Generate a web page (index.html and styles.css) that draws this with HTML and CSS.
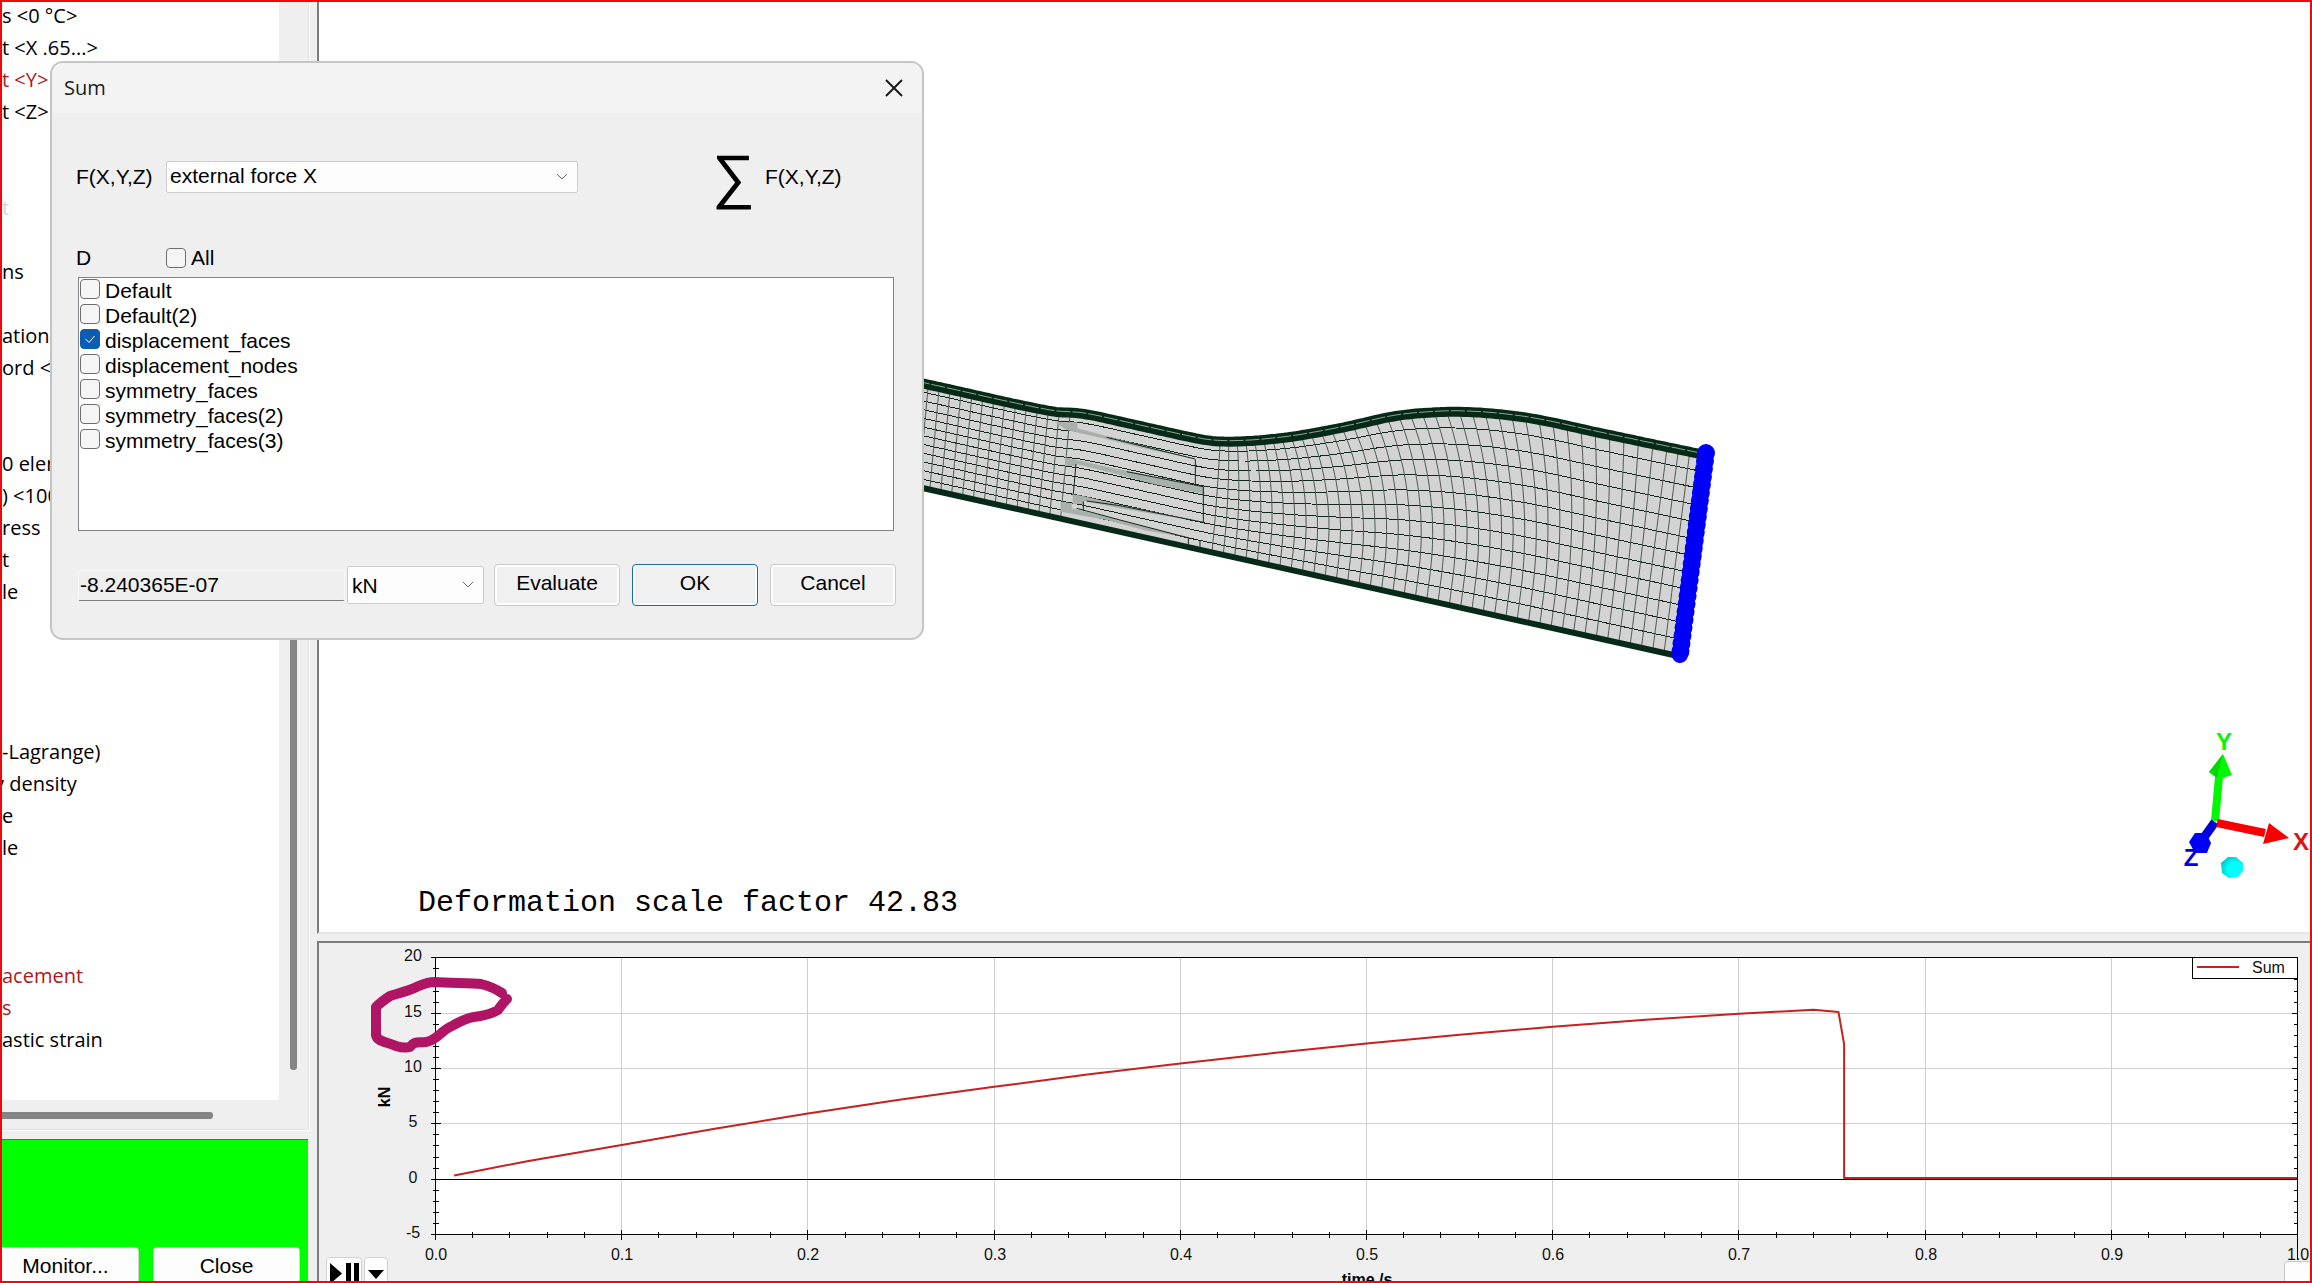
FILE: index.html
```html
<!DOCTYPE html>
<html lang="en">
<head>
<meta charset="utf-8">
<title>Sum</title>
<link rel="stylesheet" href="styles.css">
</head>
<body>
<main class="app">
  <aside class="side">
    <section class="tree-pane">
      <ul class="tree">
        <li>s &lt;0 °C&gt;</li>
        <li>t &lt;X .65...&gt;</li>
        <li class="alert">t &lt;Y&gt;</li>
        <li>t &lt;Z&gt;</li>
        <li></li>
        <li></li>
        <li class="dim">t</li>
        <li></li>
        <li>ns</li>
        <li></li>
        <li>ation &lt;</li>
        <li>ord &lt;</li>
        <li></li>
        <li></li>
        <li>0 elements</li>
        <li>) &lt;100</li>
        <li>ress</li>
        <li>t</li>
        <li>le</li>
        <li></li>
        <li></li>
        <li></li>
        <li></li>
        <li>-Lagrange)</li>
        <li class="cut">y density</li>
        <li>e</li>
        <li>le</li>
        <li></li>
        <li></li>
        <li></li>
        <li class="alert">acement</li>
        <li class="alert">s</li>
        <li>astic strain</li>
      </ul>
      <div class="scroll-v"><div class="thumb-v"></div></div>
      <div class="scroll-h"><div class="thumb-h"></div></div>
    </section>
    <section class="status-pane">
      <button class="status-btn" type="button">Monitor...</button>
      <button class="status-btn" type="button">Close</button>
    </section>
  </aside>

  <div class="work">
    <section class="scene-pane">
      <svg class="drawing" viewBox="319 2 1991 930" role="img" aria-label="Deformed mesh">
        <path id="body" class="mesh-fill"/>
        <g id="mesh"></g>
        <g transform="translate(920 360) scale(.33333)">
          <path class="shade" d="M405 187L472 187 472 205 560 228 700 265 815 293 700 272 560 238 440 210Z"/>
          <path class="shade" d="M435 292L560 320 730 355 850 380 855 403 700 372 580 340 468 312 468 318 435 318Z"/>
          <path class="shade" d="M458 403L490 408 600 435 850 485 700 462 600 445 490 422 490 432 458 432Z"/>
          <path class="shade" d="M422 425L455 430 455 445 560 470 820 535 680 512 560 480 422 455Z"/>
          <path class="crease" d="M560 232L825 297M620 335L850 380M500 423L600 437 850 487M470 445L600 480 810 535M468 312L460 402M490 424V452M826 298V375M850 380L850 487M805 535V553M840 542V560"/>
        </g>
        <path id="bottomEdge" class="edge edge-bottom"/>
        <path id="topEdge" class="edge edge-top"/>
        <path id="topSeam" class="seam"/>
        <path class="bc-core" d="M1706 453L1680 655"/>
        <path class="bc-dots" d="M1706 453L1680 655"/>

        <path d="M2215 821L2219 777" stroke="#00f800" stroke-width="8"/>
        <path d="M2223 754L2209 772 2219 779 2232 775Z" fill="#00f800"/>
        <path d="M2209 772L2223 754 2217 778Z" fill="#00d900"/>
        <path d="M2215 822L2200 843" stroke="#0000d8" stroke-width="9"/>
        <path d="M2217 823L2265 833" stroke="#f80000" stroke-width="8"/>
        <path d="M2269 823L2289 838 2263 844Z" fill="#f80000"/>
        <path d="M2195 833L2206 833 2211 843 2207 853 2195 853 2189 842Z" fill="#0000f8"/>
        <defs>
          <radialGradient id="ball" cx="65%" cy="60%" r="70%">
            <stop offset=".5" stop-color="#00ffff"/><stop offset="1" stop-color="#00c4c8"/>
          </radialGradient>
        </defs>
        <path d="M2228 857L2236 857 2243 863 2243 871 2238 877 2229 878 2222 873 2221 863Z" fill="url(#ball)"/>
        <text class="axis-name" x="2224" y="750" fill="#00f800">Y</text>
        <text class="axis-name" x="2301" y="850" fill="#dc1414">X</text>
        <text class="axis-name" x="2191" y="866" fill="#0000dc">Z</text>
        <text class="scale-note" x="418" y="911">Deformation scale factor 42.83</text>
      </svg>
    </section>

    <section class="chart-pane">
      <svg class="drawing" viewBox="319 943 1991 338" role="img" aria-label="Sum over time">
        <rect x="435" y="957" width="1862" height="277" fill="#fff"/>
        <path id="grid" class="grid"/>
        <path id="curve" class="curve"/>
        <path id="axes" class="axes"/>
        <g id="labels" class="ticks"></g>
        <text class="axis-title" transform="translate(390 1097) rotate(-90)">kN</text>
        <text class="axis-title" x="1367" y="1285">time /s</text>
        <rect x="2192.5" y="957.5" width="105" height="21" fill="#fff" stroke="#000"/>
        <path class="curve" d="M2197 967H2239"/>
        <text class="legend" x="2252" y="973">Sum</text>
        <path class="marker" d="M502 993C496 989 489 986 481 984C472 983 450 983 435 982C424 982 420 986 412 989C404 992 396 994 390 996C384 1000 379 1004 376 1007L376 1035C377 1042 388 1042 396 1046C402 1048 406 1048 410 1047C414 1041 418 1043 426 1042C438 1040 440 1031 452 1026C459 1022 466 1018 474 1017C482 1016 491 1014 498 1010C501 1006 502 1004 507 999"/>
      </svg>
      <div class="player">
        <button class="play-btn" type="button" aria-label="Play or pause">
          <svg width="36" height="34" viewBox="0 0 36 34"><path d="M4 6L16 16.500 4 27ZM20 6h5v21h-5zM28 6h5v21h-5z"/></svg>
        </button>
        <button class="play-btn" type="button" aria-label="Playback options">
          <svg width="24" height="34" viewBox="0 0 24 34"><path d="M4 13H20L12 22Z"/></svg>
        </button>
      </div>
      <button class="corner-btn" type="button" aria-label="More"></button>
    </section>
  </div>
</main>

<section class="dialog" role="dialog" aria-labelledby="dialogTitle">
  <header class="titlebar">
    <h1 class="title" id="dialogTitle">Sum</h1>
    <button class="close" type="button" aria-label="Close dialog">
      <svg width="18" height="18" viewBox="0 0 18 18"><path d="M1 1L17 17M17 1L1 17"/></svg>
    </button>
  </header>
  <form class="form">
    <div class="row-function">
      <label for="fn">F(X,Y,Z)</label>
      <span class="combo combo-fn">
        <select id="fn"><option>external force X</option></select>
        <svg class="chevron" width="12" height="8" viewBox="0 0 12 8"><path d="M1 1L6 6 11 1"/></svg>
      </span>
      <span class="sigma">∑</span>
      <span>F(X,Y,Z)</span>
    </div>
    <div class="row-domain">
      <span>D</span>
      <label class="check"><input type="checkbox">All</label>
    </div>
    <div class="list">
      <label class="check item"><input type="checkbox">Default</label>
      <label class="check item"><input type="checkbox">Default(2)</label>
      <label class="check item"><input type="checkbox" checked>displacement_faces</label>
      <label class="check item"><input type="checkbox">displacement_nodes</label>
      <label class="check item"><input type="checkbox">symmetry_faces</label>
      <label class="check item"><input type="checkbox">symmetry_faces(2)</label>
      <label class="check item"><input type="checkbox">symmetry_faces(3)</label>
    </div>
    <div class="row-actions">
      <input class="result" type="text" value="-8.240365E-07" aria-label="Result" readonly>
      <span class="combo combo-unit">
        <select aria-label="Unit"><option>kN</option></select>
        <svg class="chevron" width="12" height="8" viewBox="0 0 12 8"><path d="M1 1L6 6 11 1"/></svg>
      </span>
      <button class="btn" type="button">Evaluate</button>
      <button class="btn btn-default" type="button">OK</button>
      <button class="btn" type="button">Cancel</button>
    </div>
  </form>
</section>
<script src="plot.js"></script>
</body>
</html>
```
FILE: styles.css
```css
*, *::before, *::after { box-sizing: border-box; }

body {
  position: relative;
  margin: 0;
  height: 100vh;
  overflow: hidden;
  border: 2px solid #ee0a0a;
  background: #efefef;
  color: #000;
  font-family: "Liberation Sans", Arial, sans-serif;
  font-size: 21px;
  line-height: 24px;
}

button, input, select { font: inherit; color: inherit; margin: 0; }

.app {
  display: grid;
  grid-template-columns: 308px minmax(0, 1fr);
  gap: 7px;
  height: 100%;
}

/* Result tree on the left */
.side {
  display: flex;
  flex-direction: column;
  gap: 8px;
  min-height: 0;
}
.tree-pane {
  flex: 1;
  min-height: 0;
  display: grid;
  grid-template-columns: 1fr 30px;
  grid-template-rows: 1fr 30px;
  border-right: 1px solid #fff;
  border-bottom: 1px solid #fff;
  box-shadow: inset -1px -1px #e2e2e2;
}
.tree {
  margin: 0;
  padding: 0;
  list-style: none;
  overflow: hidden;
  background: #fff;
  font-family: "Open Sans", "Noto Sans", sans-serif;
  font-size: 20px;
  line-height: 32px;
  white-space: nowrap;
}
.tree li { height: 32px; }
.tree li:first-child { margin-top: -2px; }
.cut { margin-left: -8px; }
.alert { color: #b01818; }
.dim { color: #dcd4d4; }
.scroll-v { display: flex; justify-content: center; align-items: flex-end; padding: 0 2px 30px 0; }
.thumb-v { width: 7px; height: 80%; border-radius: 3px; background: #858585; }
.scroll-h { display: flex; align-items: center; grid-column: 1 / -1; }
.thumb-h { width: 211px; height: 7px; border-radius: 0 3px 3px 0; background: #858585; }

.status-pane {
  display: flex;
  align-items: flex-end;
  gap: 14px;
  height: 142px;
  margin-right: 2px;
  overflow: hidden;
  border-top: 1px solid #5f6a5f;
  background: #00ff00;
}
.status-btn {
  width: 147px;
  height: 38px;
  flex: none;
  margin-bottom: -4px;
  padding: 0;
  border: 1px solid #d0d8d0;
  border-radius: 4px;
  background: #fdfdfd;
}
.status-btn:first-child { margin-left: -10px; }

/* Viewport and chart */
.work { display: flex; flex-direction: column; gap: 7px; min-height: 0; }
.scene-pane, .chart-pane { border-left: 2px solid #7c7c7c; }
.scene-pane {
  flex: 1;
  min-height: 0;
  background: #fff;
  border-bottom: 2px solid #e6e6e6;
}
.chart-pane {
  position: relative;
  height: 340px;
  overflow: hidden;
  border-top: 2px solid #7c7c7c;
}
.drawing { display: block; width: 100%; height: 100%; fill: none; }

.mesh-fill { fill: #d3d3d3; }
.mesh-row { stroke: #10261b; stroke-width: 1; shape-rendering: crispEdges; }
.mesh-col { stroke: #4d5a53; stroke-width: 1; }
.shade { fill: #a9b0ac; }
.crease { stroke: #10261b; stroke-width: 3; }
.edge { stroke: #062a17; stroke-linejoin: round; }
.edge-bottom { stroke-width: 6; }
.edge-top { stroke-width: 10; }
.seam { stroke: #8fa396; stroke-width: 1; stroke-dasharray: 14 2; }
.bc-core { stroke: #0000f8; stroke-width: 16; stroke-linecap: round; }
.bc-dots { stroke: #0000f8; stroke-width: 18; stroke-linecap: round; stroke-dasharray: 0 8; }
.axis-name { font-size: 24px; font-weight: 700; text-anchor: middle; }
.scale-note { fill: #000; font-family: "Liberation Mono", "Courier New", monospace; font-size: 30px; }

.grid { stroke: #cfcfcf; shape-rendering: crispEdges; }
.axes { stroke: #000; shape-rendering: crispEdges; }
.curve { stroke: #c62020; stroke-width: 2; stroke-linejoin: round; }
.ticks { fill: #111; font-size: 16px; text-anchor: middle; }
.legend { fill: #111; font-size: 16px; }
.axis-title { fill: #000; font-size: 16px; font-weight: 700; text-anchor: middle; }
.marker { stroke: #b01465; stroke-width: 10; stroke-linecap: round; stroke-linejoin: round; }

.player { position: absolute; left: 7px; bottom: -10px; display: flex; gap: 2px; }
.play-btn {
  display: flex;
  padding: 0;
  border: 0;
  border-radius: 4px;
  background: #fdfdfd;
  box-shadow: inset 0 0 0 1px #d2d2d2;
}
.corner-btn {
  position: absolute;
  right: -6px;
  bottom: -12px;
  width: 32px;
  height: 32px;
  border: 1px solid #c8c8c8;
  border-radius: 4px;
  background: #fdfdfd;
}

/* Sum dialog, floating over the workspace */
.dialog {
  position: absolute;
  left: 48px;
  top: 59px;
  width: 874px;
  overflow: hidden;
  border: 2px solid #c5c5c5;
  border-radius: 13px;
  background: #efefef;
}
.titlebar {
  display: flex;
  align-items: center;
  justify-content: space-between;
  height: 50px;
  padding: 0 19px 0 12px;
  background: #f3f3f3;
}
.title {
  margin: 0;
  color: #1a1a1a;
  font-family: "Open Sans", "Noto Sans", sans-serif;
  font-size: 20px;
  font-weight: 400;
  line-height: 24px;
}
.close { display: flex; padding: 0; border: 0; background: none; }
.close path { fill: none; stroke: #1a1a1a; stroke-width: 2; }

.form { padding: 38px 24px 32px; }
.row-function, .row-domain {
  display: grid;
  grid-template-columns: 90px 412px 134px 53px auto;
  align-items: center;
}
.row-function { height: 52px; }
.row-function .sigma { grid-column: 4; font-size: 60px; line-height: 48px; }
.row-domain { height: 24px; margin-top: 43px; }

.combo { position: relative; display: block; }
.combo-fn { height: 32px; }
.combo-unit { width: 137px; height: 38px; margin: 0 10px 0 2px; }
.combo select {
  display: block;
  width: 100%;
  height: 100%;
  padding: 0 4px;
  appearance: none;
  border: 1px solid #cdcdcd;
  border-radius: 2px;
  background: #fdfdfd;
}
.combo-fn select { padding: 0 3px 2px; }
.combo-unit select { padding-top: 2px; }
.combo .chevron { position: absolute; right: 10px; top: 50%; margin-top: -4px; pointer-events: none; }
.chevron path { fill: none; stroke: #666; stroke-width: 1; }

.check { display: flex; align-items: center; gap: 5px; }
.check input {
  width: 20px;
  height: 20px;
  appearance: none;
  border: 1px solid #6e6e6e;
  border-radius: 4px;
  background: #f5f5f5;
}
.check input:checked {
  border-color: #0a5cad;
  background: #0a5cb4 url("data:image/svg+xml,%3Csvg xmlns='http://www.w3.org/2000/svg' viewBox='0 0 18 18'%3E%3Cpath d='M4.500 9L8 12.500 13.500 6' fill='none' stroke='white'/%3E%3C/svg%3E") center / 100% no-repeat;
}
.list {
  height: 254px;
  margin: 7px 4px 0 2px;
  padding: 0 1px;
  border: 1px solid #82868a;
  background: #fff;
}
.item { height: 25px; padding-top: 1px; align-items: flex-start; }

.row-actions { display: flex; align-items: center; margin: 33px 0 0 2px; }
.result {
  width: 267px;
  height: 31px;
  padding: 0 1px;
  border: 1px solid #f6f6f6;
  border-bottom-color: #7e7e7e;
  border-radius: 2px;
  background: none;
}
.btn {
  width: 126px;
  height: 42px;
  padding: 0 0 4px;
  border: 1px solid #cacaca;
  border-radius: 4px;
  background: #f0f0f0;
  box-shadow: inset 0 0 0 2px #fdfdfd;
}
.btn + .btn { margin-left: 12px; }
.btn-default { border-color: #1a6ba8; box-shadow: inset 0 0 0 2px #f4fdff; }
```
FILE: plot.js
```js
const byId = (id) => document.getElementById(id);
const NS = "http://www.w3.org/2000/svg";
const line = (points) => "M" + points.map((p) => p[0].toFixed(1) + " " + p[1].toFixed(1)).join("L");
const span = (from, to, step) => Array.from({ length: Math.floor((to - from) / step) + 1 }, (_, i) => from + i * step);

// Upper boundary of the specimen: measured points joined by a Hermite curve
const TOP = [[880, 374], [923, 383.5], [1050, 411], [1084, 414], [1140, 426], [1202, 439.5], [1222, 441.5],
  [1245, 441.3], [1273, 439], [1300, 435.5], [1343, 427.5], [1393, 416.5], [1427, 412.8], [1460, 411.8],
  [1500, 414.3], [1540, 420], [1600, 433], [1698, 453.5], [1720, 458]];
const slope = TOP.map((p, i) => {
  const a = TOP[Math.max(0, i - 1)], b = TOP[Math.min(TOP.length - 1, i + 1)];
  return (b[1] - a[1]) / (b[0] - a[0]);
});
const topY = (x) => {
  let i = 1;
  while (i < TOP.length - 1 && TOP[i][0] < x) i++;
  const [a, b] = [TOP[i - 1], TOP[i]];
  const w = b[0] - a[0], t = (x - a[0]) / w, s = 1 - t;
  return a[1] * (1 + 2 * t) * s * s + b[1] * (1 + 2 * s) * t * t + w * t * s * (slope[i - 1] * s - slope[i] * t);
};
const bottomY = (x) => 488 + (x - 923) * 0.2226;

// Node position: xb is the foot of the column, v runs from 0 (bottom) to 1 (top)
const node = (xb, v) => {
  const bulge = xb > 1205 && xb < 1640 ? 40 * Math.sin(Math.PI * (xb - 1205) / 435) : 0;
  const lift = Math.max(0, (v - 0.15) / 0.85);
  const lean = 0.09 + 0.035 * Math.min(1, Math.max(0, (xb - 1205) / 200));
  const x = xb + lean * (bottomY(xb) - topY(xb)) * v - bulge * lift * lift;
  return [x, bottomY(x) + (topY(x) - bottomY(x)) * v];
};

const addLine = (points, cls) => {
  const p = document.createElementNS(NS, "path");
  p.setAttribute("d", line(points));
  p.setAttribute("class", cls);
  byId("mesh").append(p);
};
const ROWS = 12;
for (let r = 1; r < ROWS; r++) addLine(span(906, 1674, 6).map((x) => node(x, r / ROWS)), "mesh-row");
const columns = [...span(908, 1062, 10.9), ...span(1212, 1674, 11.3)];
for (const x of columns) addLine(span(0, 1, 0.05).map((v) => node(x, v)), "mesh-col");

const upper = span(900, 1700, 4).map((x) => [x, topY(x)]);
byId("body").setAttribute("d", line([...upper, [1673, 655], [900, 483]]) + "Z");
byId("topEdge").setAttribute("d", line(upper));
byId("topSeam").setAttribute("d", line(upper.map(([x, y]) => [x, y - 1])));
byId("bottomEdge").setAttribute("d", line([[900, 483], [1678, 656]]));

// Chart scales
const sx = (t) => 435.5 + t * 1862;
const sy = (f) => 1179.2 - f * 11.07;
const snap = (n) => Math.floor(n) + 0.5;
let grid = "";
let axes = `M435.5 957.500H2297.500V1260M435.5 957V1240M435 ${snap(sy(-5))}H2297M435 ${snap(sy(0))}H2297`;

const label = (x, y, text) => {
  const t = document.createElementNS(NS, "text");
  t.setAttribute("x", x);
  t.setAttribute("y", y);
  t.textContent = text;
  byId("labels").append(t);
};
for (let f = -5; f <= 20; f++) {
  const y = f === 20 ? 957.5 : snap(sy(f));
  const major = f % 5 === 0;
  axes += major ? `M431 ${y}H441M2292 ${y}H2297` : `M433 ${y}H439M2294 ${y}H2297`;
  if (major) {
    grid += `M436 ${y}H2297`;
    label(413, Math.round(y + 3), String(f));
  }
}
for (let i = 0; i <= 50; i++) {
  const x = snap(sx(i / 50));
  axes += i % 5 ? `M${x} 1232V1238` : `M${x} 1230V1240`;
  if (i % 5 === 0) {
    grid += `M${x} 957V1234`;
    label(Math.round(x), 1260, (i / 50).toFixed(1));
  }
}
byId("grid").setAttribute("d", grid);
byId("axes").setAttribute("d", axes);

// Time in s, reaction in kN
const DATA = [[.01, .33], [.05, 1.65], [.1, 3.1], [.15, 4.55], [.2, 5.93], [.25, 7.2], [.3, 8.35], [.35, 9.45], [.4, 10.45],
  [.45, 11.4], [.5, 12.25], [.55, 13.05], [.6, 13.77], [.65, 14.4], [.7, 14.95], [.74, 15.3], [.7535, 15.1],
  [.7565, 12.2], [.7565, .1], [1, .1]];
byId("curve").setAttribute("d", line(DATA.map(([t, f]) => [sx(t), sy(f)])));
```
